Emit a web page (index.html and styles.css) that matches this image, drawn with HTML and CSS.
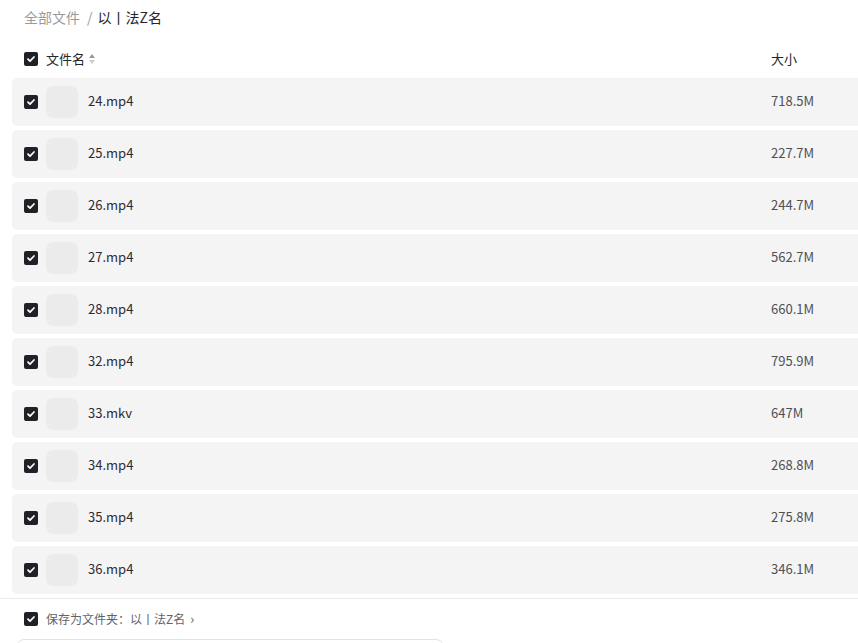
FILE: index.html
```html
<!DOCTYPE html>
<html lang="zh">
<head>
<meta charset="utf-8">
<link rel="stylesheet" href="styles.css">
</head>
<body>
<div class="page">
  <div class="crumbs">
    <span class="crumb-root">全部文件</span>
    <span class="crumb-sep">/</span>
    <span class="crumb-cur">以丨法Z名</span>
  </div>

  <div class="head">
    <span class="cb"><svg viewBox="0 0 14 14"><path d="M4 7.2l2 2 4-4.2" fill="none" stroke="#fff" stroke-width="1.8" stroke-linecap="round" stroke-linejoin="round"/></svg></span>
    <span class="h-name">文件名</span>
    <span class="sort"><svg viewBox="0 0 8 12"><path d="M4 1L7 5H1z" fill="#999"/><path d="M4 11L7 7H1z" fill="#ccc"/></svg></span>
    <span class="h-size">大小</span>
  </div>

  <div class="list">
    <div class="row"><span class="cb"><svg viewBox="0 0 14 14"><path d="M4 7.2l2 2 4-4.2" fill="none" stroke="#fff" stroke-width="1.8" stroke-linecap="round" stroke-linejoin="round"/></svg></span><span class="thumb"></span><span class="name">24.mp4</span><span class="size">718.5M</span></div>
    <div class="row"><span class="cb"><svg viewBox="0 0 14 14"><path d="M4 7.2l2 2 4-4.2" fill="none" stroke="#fff" stroke-width="1.8" stroke-linecap="round" stroke-linejoin="round"/></svg></span><span class="thumb"></span><span class="name">25.mp4</span><span class="size">227.7M</span></div>
    <div class="row"><span class="cb"><svg viewBox="0 0 14 14"><path d="M4 7.2l2 2 4-4.2" fill="none" stroke="#fff" stroke-width="1.8" stroke-linecap="round" stroke-linejoin="round"/></svg></span><span class="thumb"></span><span class="name">26.mp4</span><span class="size">244.7M</span></div>
    <div class="row"><span class="cb"><svg viewBox="0 0 14 14"><path d="M4 7.2l2 2 4-4.2" fill="none" stroke="#fff" stroke-width="1.8" stroke-linecap="round" stroke-linejoin="round"/></svg></span><span class="thumb"></span><span class="name">27.mp4</span><span class="size">562.7M</span></div>
    <div class="row"><span class="cb"><svg viewBox="0 0 14 14"><path d="M4 7.2l2 2 4-4.2" fill="none" stroke="#fff" stroke-width="1.8" stroke-linecap="round" stroke-linejoin="round"/></svg></span><span class="thumb"></span><span class="name">28.mp4</span><span class="size">660.1M</span></div>
    <div class="row"><span class="cb"><svg viewBox="0 0 14 14"><path d="M4 7.2l2 2 4-4.2" fill="none" stroke="#fff" stroke-width="1.8" stroke-linecap="round" stroke-linejoin="round"/></svg></span><span class="thumb"></span><span class="name">32.mp4</span><span class="size">795.9M</span></div>
    <div class="row"><span class="cb"><svg viewBox="0 0 14 14"><path d="M4 7.2l2 2 4-4.2" fill="none" stroke="#fff" stroke-width="1.8" stroke-linecap="round" stroke-linejoin="round"/></svg></span><span class="thumb"></span><span class="name">33.mkv</span><span class="size">647M</span></div>
    <div class="row"><span class="cb"><svg viewBox="0 0 14 14"><path d="M4 7.2l2 2 4-4.2" fill="none" stroke="#fff" stroke-width="1.8" stroke-linecap="round" stroke-linejoin="round"/></svg></span><span class="thumb"></span><span class="name">34.mp4</span><span class="size">268.8M</span></div>
    <div class="row"><span class="cb"><svg viewBox="0 0 14 14"><path d="M4 7.2l2 2 4-4.2" fill="none" stroke="#fff" stroke-width="1.8" stroke-linecap="round" stroke-linejoin="round"/></svg></span><span class="thumb"></span><span class="name">35.mp4</span><span class="size">275.8M</span></div>
    <div class="row"><span class="cb"><svg viewBox="0 0 14 14"><path d="M4 7.2l2 2 4-4.2" fill="none" stroke="#fff" stroke-width="1.8" stroke-linecap="round" stroke-linejoin="round"/></svg></span><span class="thumb"></span><span class="name">36.mp4</span><span class="size">346.1M</span></div>
  </div>

  <div class="footer">
    <div class="save">
      <span class="cb"><svg viewBox="0 0 14 14"><path d="M4 7.2l2 2 4-4.2" fill="none" stroke="#fff" stroke-width="1.8" stroke-linecap="round" stroke-linejoin="round"/></svg></span>
      <span class="save-text">保存为文件夹：以丨法Z名</span>
      <span class="chev">›</span>
    </div>
    <div class="input-box"></div>
  </div>
</div>
</body>
</html>
```

FILE: styles.css
```css
* { box-sizing: border-box; }
html, body { margin: 0; padding: 0; background: #fff; }
body {
  font-family: "Noto Sans CJK SC", "Noto Sans", sans-serif;
  color: #25262b;
  overflow: hidden;
  width: 858px;
  height: 643px;
}
.page { width: 858px; }

.crumbs {
  height: 37px;
  padding: 7px 0 0 24px;
  font-size: 14px;
  line-height: 20px;
  display: flex;
  align-items: flex-start;
}
.crumb-root { color: #9a9a9f; }
.crumb-sep { color: #9a9a9f; margin: 0 5px 0 7px; }
.crumb-cur { color: #25262b; }

.cb {
  width: 14px;
  height: 14px;
  border-radius: 2px;
  background: #202126;
  display: inline-flex;
  flex: none;
}
.cb svg { width: 14px; height: 14px; }

.head {
  height: 41px;
  padding: 2px 0 0 24px;
  display: flex;
  align-items: center;
  font-size: 13px;
}
.h-name { margin-left: 8px; color: #25262b; margin-bottom: 1px; }
.sort { display: inline-flex; margin-left: 3px; }
.sort svg { width: 8px; height: 12px; }
.h-size { margin-left: auto; width: 87px; color: #25262b; margin-bottom: 1px; }

.list {
  padding-left: 12px;
  display: flex;
  flex-direction: column;
  gap: 4px;
}
.row {
  height: 48px;
  background: #f4f4f4;
  border-radius: 5px 0 0 5px;
  display: flex;
  align-items: center;
  padding-left: 12px;
  font-size: 13px;
}
.thumb {
  width: 32px;
  height: 32px;
  border-radius: 7px;
  background: #ebebeb;
  margin-left: 8px;
  flex: none;
}
.name { margin-left: 10px; color: #2b2c31; margin-bottom: 3px; }
.size { margin-left: auto; width: 87px; color: #4f5055; margin-bottom: 3px; }

.footer {
  margin-top: 4px;
  border-top: 1px solid #ececec;
  padding-top: 13px;
}
.save {
  display: flex;
  align-items: center;
  padding-left: 24px;
  height: 14px;
  font-size: 12px;
  color: #62636a;
}
.save-text { margin-left: 8px; margin-bottom: 1px; }
.chev { margin-left: 5px; font-size: 13px; color: #62636a; margin-bottom: 2px; }
.input-box {
  margin: 13px 0 0 16px;
  width: 428px;
  height: 40px;
  border: 1px solid #e3e3e3;
  border-radius: 8px;
}
```
